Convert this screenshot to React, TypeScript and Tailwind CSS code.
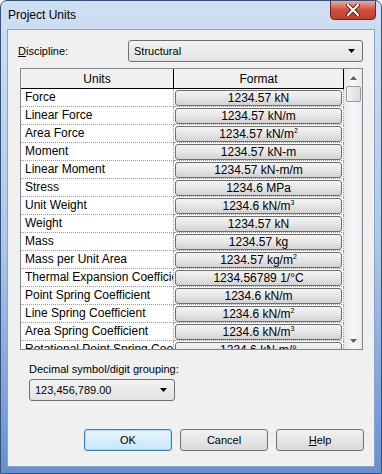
import React from 'react';

type Row = { label: string; value: string; unit: string; sup?: string };

const ROWS: Row[] = [
  { label: 'Force', value: '1234.57', unit: 'kN' },
  { label: 'Linear Force', value: '1234.57', unit: 'kN/m' },
  { label: 'Area Force', value: '1234.57', unit: 'kN/m', sup: '2' },
  { label: 'Moment', value: '1234.57', unit: 'kN-m' },
  { label: 'Linear Moment', value: '1234.57', unit: 'kN-m/m' },
  { label: 'Stress', value: '1234.6', unit: 'MPa' },
  { label: 'Unit Weight', value: '1234.6', unit: 'kN/m', sup: '3' },
  { label: 'Weight', value: '1234.57', unit: 'kN' },
  { label: 'Mass', value: '1234.57', unit: 'kg' },
  { label: 'Mass per Unit Area', value: '1234.57', unit: 'kg/m', sup: '2' },
  { label: 'Thermal Expansion Coefficient', value: '1234.56789', unit: '1/°C' },
  { label: 'Point Spring Coefficient', value: '1234.6', unit: 'kN/m' },
  { label: 'Line Spring Coefficient', value: '1234.6', unit: 'kN/m', sup: '2' },
  { label: 'Area Spring Coefficient', value: '1234.6', unit: 'kN/m', sup: '3' },
  { label: 'Rotational Point Spring Coefficient', value: '1234.6', unit: 'kN-m/°' },
];

function DownArrow() {
  return (
    <svg width="7" height="4" viewBox="0 0 7 4">
      <path d="M0 0 H7 L3.5 4 Z" fill="#000" />
    </svg>
  );
}

function Combo({ text, className }: { text: string; className: string }) {
  return (
    <div
      className={`flex items-center justify-between rounded-[3px] border border-[#707070] bg-gradient-to-b from-[#f2f2f2] to-[#e3e3e3] pl-[5px] pr-[7px] ${className}`}
    >
      <span className="text-[11px] leading-none">{text}</span>
      <DownArrow />
    </div>
  );
}

function DialogButton({ children, primary }: { children: React.ReactNode; primary?: boolean }) {
  return (
    <button
      className={
        primary
          ? 'w-[88px] h-[22px] rounded-[3px] border border-[#3c7fb1] bg-gradient-to-b from-[#eaf6fd] to-[#c6e6f7] text-[11px] shadow-[inset_0_0_0_1px_#a6dcf5]'
          : 'w-[88px] h-[22px] rounded-[3px] border border-[#707070] bg-gradient-to-b from-[#f2f2f2] to-[#dadada] text-[11px]'
      }
    >
      {children}
    </button>
  );
}

export default function App() {
  return (
    <div className="w-[382px] h-[474px] flex flex-col overflow-hidden rounded-t-[7px] border border-[#34527c] bg-gradient-to-b from-[#cfe0f3] via-[#aec8e8] to-[#6890cf] font-['Liberation_Sans',Arial,sans-serif] text-black">
      {/* Title bar */}
      <div className="relative h-[28px] flex items-center pl-[7px] shrink-0">
        <span className="text-[12px]">Project Units</span>
        <div className="absolute right-[5px] -top-px w-[46px] h-[20px] flex items-center justify-center rounded-b-[4px] border border-[#6b2a22] bg-gradient-to-b from-[#e9a99b] via-[#cf4f3e] to-[#c0402f]">
          <svg width="14" height="12" viewBox="0 0 14 12">
            <path d="M2 1 L12 11 M12 1 L2 11" stroke="#5a1a12" strokeWidth="4" strokeLinecap="round" />
            <path d="M2 1 L12 11 M12 1 L2 11" stroke="#fff" strokeWidth="2.2" strokeLinecap="round" />
          </svg>
        </div>
      </div>

      {/* Client area */}
      <div className="flex-1 mx-[6px] mb-[6px] flex flex-col border border-[#8aa4c8] bg-[#f0f0f0] pt-[10px]">
        <div className="flex items-center h-[22px] pl-[10px] pr-[11px]">
          <span className="w-[110px] text-[11px]">
            <span className="underline">D</span>iscipline:
          </span>
          <Combo text="Structural" className="flex-1 h-[22px]" />
        </div>

        {/* Grid */}
        <div className="mt-[6px] ml-[12px] mr-[11px] h-[282px] flex border border-[#828790] bg-white">
          <div className="w-[323px] flex flex-col">
            <div className="flex h-[20px] shrink-0 border-b border-[#000] bg-[#f0f0f0] text-[12px]">
              <div className="w-[153px] flex items-center justify-center border-r border-[#000]">Units</div>
              <div className="w-[170px] flex items-center justify-center border-r border-[#000]">Format</div>
            </div>
            <div className="h-[260px] overflow-hidden">
              {ROWS.map((r) => (
                <div key={r.label} className="flex h-[18px] text-[12px]">
                  <div className="w-[153px] overflow-hidden whitespace-nowrap border-r border-b border-dotted border-[#9a9a9a] pl-[4px] leading-[17px]">
                    {r.label}
                  </div>
                  <div className="w-[170px] border-r border-b border-dotted border-[#9a9a9a] pl-px pt-px">
                    <div className="w-[167px] h-[16px] flex items-center justify-center rounded-[3px] border border-[#6f6f6f] bg-gradient-to-b from-[#f4f4f4] via-[#e6e6e6] to-[#d2d2d2] leading-none whitespace-nowrap">
                      {r.value} {r.unit}
                      {r.sup && <span className="relative -top-[4px] text-[7px]">{r.sup}</span>}
                    </div>
                  </div>
                </div>
              ))}
            </div>
          </div>
          {/* Scrollbar */}
          <div className="w-[18px] flex flex-col items-center bg-gradient-to-r from-[#e8e8e8] via-[#f7f7f7] to-[#ececec]">
            <div className="h-[17px] w-full flex items-center justify-center">
              <svg width="7" height="4" viewBox="0 0 7 4">
                <path d="M0 4 H7 L3.5 0 Z" fill="#606060" />
              </svg>
            </div>
            <div className="w-[15px] h-[16px] rounded-[2px] border border-[#9a9a9a] bg-gradient-to-r from-[#f3f3f3] to-[#dcdcdc]" />
            <div className="flex-1" />
            <div className="h-[17px] w-full flex items-center justify-center">
              <svg width="7" height="4" viewBox="0 0 7 4">
                <path d="M0 0 H7 L3.5 4 Z" fill="#606060" />
              </svg>
            </div>
          </div>
        </div>

        <div className="mt-[12px] ml-[21px] text-[11px] leading-[14px]">Decimal symbol/digit grouping:</div>
        <Combo text="123,456,789.00" className="mt-[3px] ml-[21px] w-[146px] h-[22px]" />

        <div className="mt-[28px] flex justify-end gap-[8px] pr-[10px]">
          <DialogButton primary>OK</DialogButton>
          <DialogButton>Cancel</DialogButton>
          <DialogButton>
            <span className="underline">H</span>elp
          </DialogButton>
        </div>
      </div>
    </div>
  );
}
